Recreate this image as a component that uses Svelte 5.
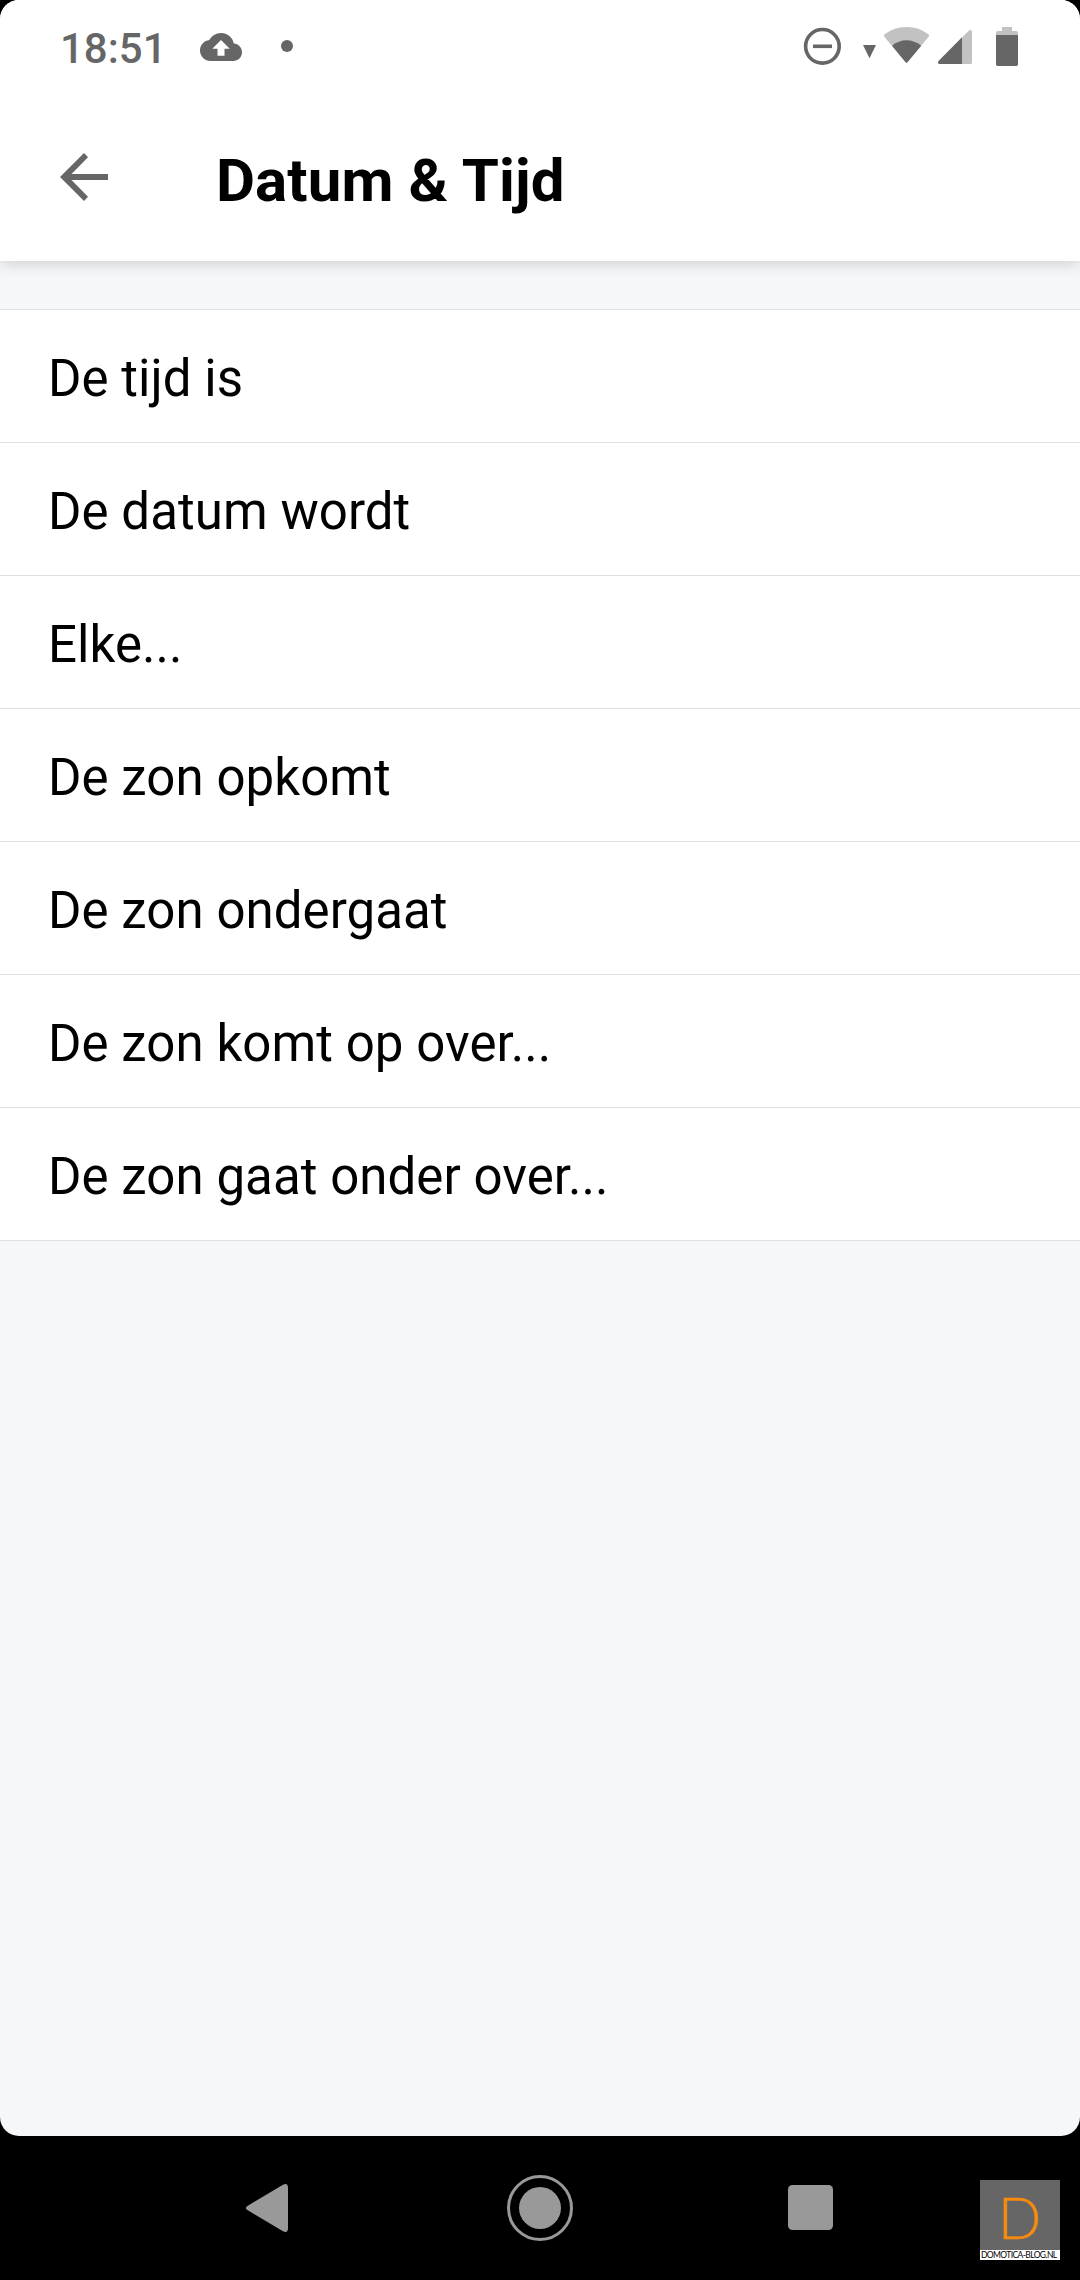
<script lang="ts">
    const title = 'Datum & Tijd';

    const triggers = [
        'De tijd is',
        'De datum wordt',
        'Elke...',
        'De zon opkomt',
        'De zon ondergaat',
        'De zon komt op over...',
        'De zon gaat onder over...'
    ];
</script>

<div class="phone">
    <div class="screen">
        <header>
            <div class="status">
                <span class="time">18:51</span>
                <svg class="cloud" width="42" height="42" viewBox="0 0 24 24">
                    <path d="M19.35 10.04C18.67 6.59 15.64 4 12 4 9.11 4 6.6 5.64 5.35 8.04 2.34 8.36 0 10.91 0 14c0 3.31 2.69 6 6 6h13c2.76 0 5-2.24 5-5 0-2.64-2.05-4.78-4.65-4.96zM14 13v4h-4v-4H7l5-5 5 5h-3z" />
                </svg>
                <span class="dot"></span>
                <svg class="system" width="220" height="48" viewBox="800 22 220 48">
                    <circle class="line" cx="822.4" cy="46.3" r="16.8" />
                    <path d="M813 44.5h19v3.6h-19z" />
                    <path d="M863 45h13l-6.5 13.3z" />
                    <path class="light" d="M906.500 63 884.300 36.700Q883.500 35.300 884.700 34.300Q894 27 906.500 27T928.300 34.300Q929.500 35.300 928.700 36.700Z" />
                    <path d="M892 45.800Q898.500 40.300 906.500 40.300T921.200 45.800L907.700 62.100Q906.500 63.300 905.300 62.100Z" />
                    <path class="light" d="M962 37.500 969 30.500Q972 28.800 972 31.800V62.500Q972 64 970.500 64H962Z" />
                    <path d="M962 37.300V64H939.500Q937 63.500 938.500 61Z" />
                    <path class="light" d="M996 35v-2.300q0-1.700 1.700-1.700h4.300v-4h10v4h4.300q1.700 0 1.700 1.700V35z" />
                    <path d="M996 35h22v29.300q0 1.700-1.700 1.700h-18.600q-1.700 0-1.700-1.700z" />
                </svg>
            </div>
            <div class="toolbar">
                <svg class="back" width="48" height="48" viewBox="0 0 48 48">
                    <path d="M48 21H11.500L28 4.200 24 0 0 24 24 48 28 43.800 11.500 27H48z" />
                </svg>
                <h1>{title}</h1>
            </div>
        </header>

        <ul>
            {#each triggers as trigger}
                <li>{trigger}</li>
            {/each}
        </ul>
    </div>

    <nav>
        <svg class="nav-back" width="42" height="48" viewBox="0 0 42 48">
            <path d="M1 22.200 37 .8Q42-1.500 42 4V44Q42 49.500 37 47.200L1 25.800Q-1 24 1 22.200z" />
        </svg>
        <div class="home"><span></span></div>
        <div class="recent"></div>
        <div class="logo">
            <div class="letter">D</div>
            <div class="site">DOMOTICA-BLOG.NL</div>
        </div>
    </nav>
</div>

<style>
    :global(body) {
        background: #000;
    }

    .phone {
        width: 1080px;
        height: 2280px;
        overflow: hidden;
        background: #000;
        font-family: Roboto, sans-serif;
    }

    .screen {
        height: 2136px;
        overflow: hidden;
        border-radius: 19px;
        background: #f5f7f9;
    }

    header {
        height: 261px;
        background: #fff;
        box-shadow: 0 3px 14px rgba(0, 0, 0, 0.16);
    }

    .status {
        display: flex;
        align-items: center;
        height: 94px;
        padding: 0 60px;
        box-sizing: border-box;
        color: #666;
    }

    .time {
        width: 140px;
        padding-top: 3px;
        font-size: 42px;
        font-weight: 500;
        line-height: 50px;
    }

    svg {
        display: block;
        flex: none;
        fill: #666;
    }

    .dot {
        width: 12px;
        height: 12px;
        margin: 0 0 2px 39px;
        border-radius: 50%;
        background: #666;
    }

    .system {
        margin: 0 0 2px auto;
    }

    .light {
        fill: #c2c2c2;
    }

    .line {
        fill: none;
        stroke: #666;
        stroke-width: 3.6;
    }

    .toolbar {
        display: flex;
        align-items: center;
        height: 166px;
        padding-left: 60px;
    }

    h1 {
        margin: 7px 0 0 108px;
        font-size: 60px;
        font-weight: 700;
        line-height: 70px;
        letter-spacing: 0.12px;
        color: #000;
    }

    ul {
        margin: 48px 0 0;
        padding: 0;
        list-style: none;
        border-top: 1px solid #dfe0e2;
        background: #fff;
    }

    li {
        height: 133px;
        padding: 5px 48px 0;
        box-sizing: border-box;
        border-bottom: 1px solid #dfe0e2;
        font-size: 51px;
        line-height: 127px;
        letter-spacing: 0.06px;
        color: #000;
    }

    nav {
        display: flex;
        align-items: center;
        height: 144px;
        padding: 0 20px 0 246px;
    }

    .nav-back {
        fill: #999;
    }

    .home {
        display: flex;
        align-items: center;
        justify-content: center;
        width: 66px;
        height: 66px;
        margin-left: 219px;
        box-sizing: border-box;
        border: 3px solid #999;
        border-radius: 50%;
    }

    .home span {
        width: 42px;
        height: 42px;
        border-radius: 50%;
        background: #999;
    }

    .recent {
        width: 45px;
        height: 45px;
        margin: 0 0 1px 214.5px;
        border-radius: 4.5px;
        background: #999;
    }

    .logo {
        width: 80px;
        height: 80px;
        margin: 24px 0 0 auto;
        overflow: hidden;
        background: #666;
        font-family: Lato, sans-serif;
    }

    .letter {
        height: 70px;
        padding-left: 18px;
        box-sizing: border-box;
        font-size: 57px;
        font-weight: 300;
        line-height: 75px;
        -webkit-text-stroke: 0.5px #f68b10;
        color: #f68b10;
    }

    .site {
        height: 10px;
        padding-left: 1px;
        background: #fff;
        font-size: 8.5px;
        line-height: 11px;
        letter-spacing: -0.6px;
        white-space: nowrap;
        color: #000;
    }
</style>
